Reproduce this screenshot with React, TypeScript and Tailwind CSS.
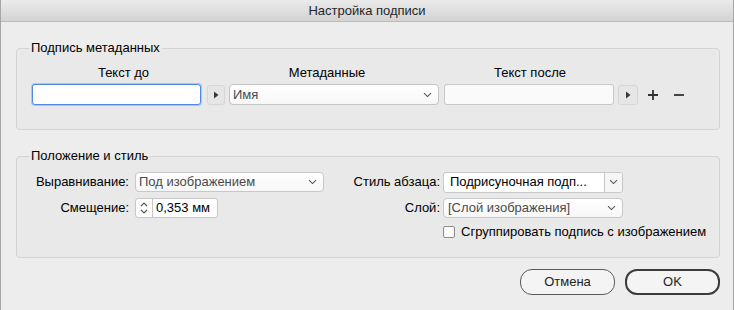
import React from "react";

const Chevron = () => (
  <svg width="9" height="6" viewBox="0 0 9 6" className="shrink-0">
    <path d="M1 1.2 L4.5 4.6 L8 1.2" fill="none" stroke="#555" strokeWidth="1.1" />
  </svg>
);

const Tri = () => (
  <svg width="6" height="8" viewBox="0 0 6 8">
    <path d="M1 0.5 L5.5 4 L1 7.5 Z" fill="#3a3a3a" />
  </svg>
);

const ArrowBtn = ({ w }: { w: string }) => (
  <div className={`${w} h-[20px] rounded-[3px] border border-[#d6d6d6] bg-[#e6e6e6] flex items-center justify-center`}>
    <Tri />
  </div>
);

export default function App() {
  return (
    <div className="w-[734px] h-[310px] bg-[#ededed] border-x border-[#a6a6a6] flex flex-col font-['Liberation_Sans',Arial,sans-serif] text-[13px] leading-[16px] text-black overflow-hidden">
      {/* title bar */}
      <div className="h-[22px] shrink-0 border-b border-[#bdbdbd] bg-linear-to-b from-[#ebebeb] to-[#d3d3d3] flex items-center justify-center text-[#262626]">
        Настройка подписи
      </div>

      {/* group 1 */}
      <fieldset className="ml-[15px] w-[704px] mt-[18px] border border-[#d4d4d4] rounded-[4px] bg-[#e9e9e9] pl-[14px] pt-[9px] pb-[24px]">
        <legend className="px-[2px] -ml-[2px]">Подпись метаданных</legend>
        <div className="flex h-[16px]">
          <div className="ml-[1px] w-[183px] text-center">Текст до</div>
          <div className="w-[224px] text-center">Метаданные</div>
          <div className="ml-[6px] w-[170px] text-center">Текст после</div>
        </div>
        <div className="flex items-center mt-[3px]">
          <div className="ml-[1px] w-[169px] h-[21px] rounded-[3px] border border-[#4f8ae0] bg-white shadow-[0_0_0_1px_#a9c7f0]" />
          <div className="ml-[6px]">
            <ArrowBtn w="w-[18px]" />
          </div>
          <div className="ml-[4px] w-[210px] h-[21px] rounded-[4px] border border-[#c4c4c4] bg-linear-to-b from-white to-[#f7f7f7] flex items-center justify-between pl-[3px] pr-[6px] text-[#4a4a4a]">
            <span>Имя</span>
            <Chevron />
          </div>
          <div className="ml-[5px] w-[170px] h-[21px] rounded-[3px] border border-[#c8c8c8] bg-[#fafafa]" />
          <div className="ml-[4px]">
            <ArrowBtn w="w-[20px]" />
          </div>
          <svg width="12" height="12" viewBox="0 0 12 12" className="ml-[9px]">
            <path d="M6 1 V11 M1 6 H11" stroke="#333" strokeWidth="1.8" />
          </svg>
          <svg width="12" height="12" viewBox="0 0 12 12" className="ml-[14px]">
            <path d="M1 6 H11" stroke="#333" strokeWidth="1.8" />
          </svg>
        </div>
      </fieldset>

      {/* group 2 */}
      <fieldset className="ml-[15px] w-[704px] mt-[18px] border border-[#d4d4d4] rounded-[4px] bg-[#e9e9e9] pl-[14px] pt-[8px] pb-[17px]">
        <legend className="px-[2px] -ml-[2px]">Положение и стиль</legend>
        <div className="flex items-center h-[20px]">
          <div className="w-[98px] text-right">Выравнивание:</div>
          <div className="ml-[6px] w-[189px] h-[20px] rounded-[4px] border border-[#c8c8c8] bg-linear-to-b from-white to-[#f7f7f7] flex items-center justify-between pl-[3px] pr-[6px] text-[#4a4a4a]">
            <span>Под изображением</span>
            <Chevron />
          </div>
          <div className="w-[116px] text-right">Стиль абзаца:</div>
          <div className="ml-[3px] w-[180px] h-[21px] rounded-[3px] border border-[#c8c8c8] bg-white flex items-center">
            <span className="flex-1 pl-[6px] whitespace-nowrap">Подрисуночная подп...</span>
            <div className="w-[18px] h-full border-l border-[#c8c8c8] bg-[#f6f6f6] rounded-r-[3px] flex items-center justify-center">
              <Chevron />
            </div>
          </div>
        </div>
        <div className="flex items-center h-[20px] mt-[6px]">
          <div className="w-[98px] text-right">Смещение:</div>
          <div className="ml-[6px] w-[83px] h-[20px] rounded-[3px] border border-[#c8c8c8] bg-white flex items-center">
            <div className="w-[17px] h-full border-r border-[#c8c8c8] flex flex-col items-center justify-center gap-[2px]">
              <svg width="8" height="5" viewBox="0 0 8 5">
                <path d="M1 4 L4 1 L7 4" fill="none" stroke="#555" strokeWidth="1.1" />
              </svg>
              <svg width="8" height="5" viewBox="0 0 8 5">
                <path d="M1 1 L4 4 L7 1" fill="none" stroke="#555" strokeWidth="1.1" />
              </svg>
            </div>
            <span className="pl-[3px] whitespace-nowrap">0,353 мм</span>
          </div>
          <div className="w-[222px] text-right">Слой:</div>
          <div className="ml-[3px] w-[180px] h-[20px] rounded-[4px] border border-[#c8c8c8] bg-linear-to-b from-white to-[#f7f7f7] flex items-center justify-between pl-[4px] pr-[6px] text-[#4a4a4a]">
            <span>[Слой изображения]</span>
            <Chevron />
          </div>
        </div>
        <div className="flex items-center h-[16px] mt-[6px] ml-[412px]">
          <div className="w-[12px] h-[12px] rounded-[2px] border border-[#8c8c8c] bg-white" />
          <span className="ml-[6px] whitespace-nowrap">Сгруппировать подпись с изображением</span>
        </div>
      </fieldset>

      {/* buttons */}
      <div className="flex justify-end gap-[10px] mt-[11px] pr-[13px]">
        <div className="w-[95px] h-[26px] rounded-[12px] border border-[#5a5a5a] bg-[#f4f4f4] flex items-center justify-center text-[#222]">
          Отмена
        </div>
        <div className="w-[95px] h-[26px] rounded-[12px] border-2 border-[#3c3c3c] bg-[#f4f4f4] flex items-center justify-center text-[#222]">
          OK
        </div>
      </div>
    </div>
  );
}
